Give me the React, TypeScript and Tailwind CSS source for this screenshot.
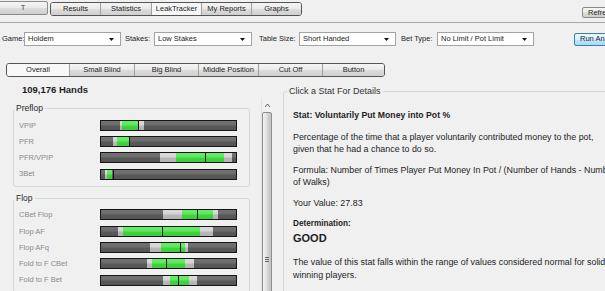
import React from "react";

const F = "font-['Liberation_Sans',Arial,sans-serif]";
const BTN =
  "bg-[linear-gradient(to_bottom,#f4f4f4_0%,#ececec_45%,#dddddd_52%,#cfcfcf_100%)]";

type Bar = { label: string; light: [number, number]; green: [number, number]; marker: number };

const preflop: Bar[] = [
  { label: "VPIP", light: [120, 144], green: [122, 138], marker: 138 },
  { label: "PFR", light: [113, 129], green: [117, 128.5], marker: 129 },
  { label: "PFR/VPIP", light: [160, 232], green: [176, 224], marker: 205 },
  { label: "3Bet", light: [105, 112], green: [107, 112], marker: 112.5 },
];

const flop: Bar[] = [
  { label: "CBet Flop", light: [163, 218], green: [182, 213], marker: 197 },
  { label: "Flop AF", light: [118, 213], green: [123, 200], marker: 162 },
  { label: "Flop AFq", light: [150, 188], green: [161, 185], marker: 180 },
  { label: "Fold to F CBet", light: [147, 194], green: [152, 185], marker: 166 },
  { label: "Fold to F Bet", light: [163, 197], green: [170, 189], marker: 178 },
];

const X0 = 101;

function StatBar({ b }: { b: Bar }) {
  return (
    <div className="relative w-[137px] h-[11px] border border-[#161616] overflow-hidden bg-[linear-gradient(to_bottom,#717171_0%,#6c6c6c_45%,#585858_55%,#555555_100%)]">
      <div
        className="absolute top-0 bottom-0 bg-[linear-gradient(to_bottom,#dadada_0%,#d4d4d4_45%,#b8b8b8_55%,#b2b2b2_100%)]"
        style={{ left: b.light[0] - X0, width: b.light[1] - b.light[0] }}
      />
      <div
        className="absolute top-0 bottom-0 bg-[linear-gradient(to_bottom,#68ee68_0%,#5ce85c_45%,#40d440_55%,#3bcc3b_100%)]"
        style={{ left: b.green[0] - X0, width: b.green[1] - b.green[0] }}
      />
      <div className="absolute top-0 bottom-0 w-px bg-[#111]" style={{ left: b.marker - X0 }} />
    </div>
  );
}

function Group({ title, bars, className }: { title: string; bars: Bar[]; className: string }) {
  return (
    <div className={`relative w-[237px] border border-[#d3d8dc] rounded-[3px] pt-[8px] pb-[4px] ${className}`}>
      <div className="absolute left-0 top-[-6px] px-[2px] bg-[#f0f0f0] text-[8.5px] leading-[10px] text-[#2a2a2a]">
        {title}
      </div>
      {bars.map((b) => (
        <div key={b.label} className="flex items-center h-[16.3px]">
          <div className="w-[86px] pl-[5px] text-[7.5px] text-[#8a8a8a] whitespace-nowrap">{b.label}</div>
          <StatBar b={b} />
        </div>
      ))}
    </div>
  );
}

function Select({ value, w }: { value: string; w: string }) {
  return (
    <div className={`relative ${w} h-[14px] bg-white border border-[#a3a3a3] flex items-center pl-[3px] text-[7.5px] shrink-0`}>
      <span>{value}</span>
      <svg className="absolute right-[6px] top-[5px]" width="5" height="3" viewBox="0 0 5 3">
        <path d="M0 0H5L2.5 3Z" fill="#111" />
      </svg>
    </div>
  );
}

export default function App() {
  const topTabs: [string, string][] = [
    ["Results", "w-[49px]"],
    ["Statistics", "w-[51px]"],
    ["LeakTracker", "w-[50px]"],
    ["My Reports", "w-[50px]"],
    ["Graphs", "w-[50px]"],
  ];
  const posTabs: [string, string][] = [
    ["Overall", "w-[62px]"],
    ["Small Blind", "w-[65px]"],
    ["Big Blind", "w-[64px]"],
    ["Middle Position", "w-[60px]"],
    ["Cut Off", "w-[64px]"],
    ["Button", "w-[62px]"],
  ];
  return (
    <div className={`w-[605px] h-[291px] overflow-hidden bg-[#f0f0f0] text-[#1e1e1e] ${F}`}>
      {/* top bar */}
      <div className="h-[23px] flex items-start border-b border-[#a8a8a8] overflow-hidden">
        <div className={`ml-[-2px] mt-[1px] w-[50px] h-[14px] shrink-0 border border-[#8a8a8a] rounded-[2px] flex items-center justify-center text-[7.5px] text-[#444] ${BTN}`}>
          T
        </div>
        <div className="ml-[2px] mt-[2px] flex h-[14px] shrink-0 border border-[#555] rounded-[3px] overflow-hidden">
          {topTabs.map(([t, w], i) => (
            <div
              key={t}
              className={`${w} flex items-center justify-center text-[7.5px] ${i > 0 ? "border-l border-[#a0a0a0]" : ""} ${
                i === 2 ? "bg-[#f6f6f6]" : BTN
              }`}
            >
              {t}
            </div>
          ))}
        </div>
        <div className={`ml-[280px] mt-[7px] w-[50px] h-[11px] shrink-0 border border-[#8a8a8a] rounded-[2px] flex items-center pl-[5px] text-[7.5px] ${BTN}`}>
          Refresh
        </div>
      </div>

      {/* filters */}
      <div className="flex items-center pt-[9px] h-[23px] text-[7.5px] whitespace-nowrap">
        <div className="w-[24px] pl-[2px] shrink-0">Game:</div>
        <Select value="Holdem" w="w-[97px]" />
        <div className="ml-[4px] w-[29px] shrink-0">Stakes:</div>
        <Select value="Low Stakes" w="w-[98px]" />
        <div className="ml-[7px] w-[40px] shrink-0">Table Size:</div>
        <Select value="Short Handed" w="w-[97px]" />
        <div className="ml-[5px] w-[36px] shrink-0">Bet Type:</div>
        <Select value="No Limit / Pot Limit" w="w-[97px]" />
        <div className="ml-[40px] w-[60px] h-[13px] shrink-0 border border-[#3c7fb1] rounded-[2px] flex items-center pl-[5px] bg-[linear-gradient(to_bottom,#eaf6fd_0%,#d9f0fc_50%,#bee6fd_52%,#a7d9f5_100%)]">
          Run Analysis
        </div>
      </div>

      {/* position tabs */}
      <div className="mt-[17px] ml-[6px] flex h-[14px] w-fit border border-[#555] rounded-[3px] overflow-hidden text-[7.5px]">
        {posTabs.map(([t, w], i) => (
          <div
            key={t}
            className={`${w} flex items-center justify-center whitespace-nowrap ${i > 0 ? "border-l border-[#a0a0a0]" : ""} ${
              i === 0 ? "bg-[#f8f8f8]" : BTN
            }`}
          >
            {t}
          </div>
        ))}
      </div>

      {/* body */}
      <div className="mt-[3px] flex">
        <div className="ml-[13px] w-[237px] shrink-0">
          <div className="mt-[4px] ml-[9px] leading-[12px] text-[9.5px] font-bold">109,176 Hands</div>
          <Group title="Preflop" bars={preflop} className="mt-[12px]" />
          <Group title="Flop" bars={flop} className="mt-[10.5px]" />
        </div>

        {/* scrollbar */}
        <div className="ml-[11px] mt-[18px] w-[11px] h-[200px] shrink-0 flex flex-col border-l border-[#e2e2e2]">
          <div className="h-[14px] flex items-center justify-center">
            <svg width="5" height="3" viewBox="0 0 5 3">
              <path d="M0 3L2.5 0L5 3" fill="none" stroke="#555" strokeWidth="0.9" />
            </svg>
          </div>
          <div className="flex-1 border border-[#8f8f8f] rounded-[2px] bg-[linear-gradient(to_right,#f2f2f2_0%,#e4e4e4_40%,#d2d2d2_60%,#c4c4c4_100%)] flex justify-center">
            <div className="mt-[144px] flex flex-col gap-[1px]">
              <div className="w-[4px] h-px bg-[#666]" />
              <div className="w-[4px] h-px bg-[#666]" />
              <div className="w-[4px] h-px bg-[#666]" />
            </div>
          </div>
        </div>

        {/* details */}
        <div className="relative ml-[11px] mt-[11px] w-[340px] h-[230px] shrink-0 border border-[#d3d8dc] rounded-[3px] pl-[9px] pt-[16.5px] text-[8.9px] leading-[12.5px] whitespace-nowrap">
          <div className="absolute left-[3px] top-[-6px] px-[2px] bg-[#f0f0f0] leading-[10px] text-[9px] text-[#333]">
            Click a Stat For Details
          </div>
          <div className="font-bold text-[8.7px]">Stat: Voluntarily Put Money into Pot %</div>
          <div className="mt-[9.5px]">
            Percentage of the time that a player voluntarily contributed money to the pot,
            <br />
            given that he had a chance to do so.
          </div>
          <div className="mt-[8px]">
            Formula: Number of Times Player Put Money In Pot / (Number of Hands - Number
            <br />
            of Walks)
          </div>
          <div className="mt-[8px]">Your Value: 27.83</div>
          <div className="mt-[8.5px] font-bold text-[8.2px]">Determination:</div>
          <div className="mt-[0.5px] font-bold text-[11px] leading-[14px]">GOOD</div>
          <div className="mt-[11.5px]">
            The value of this stat falls within the range of values considered normal for solid
            <br />
            winning players.
          </div>
        </div>
      </div>
    </div>
  );
}
